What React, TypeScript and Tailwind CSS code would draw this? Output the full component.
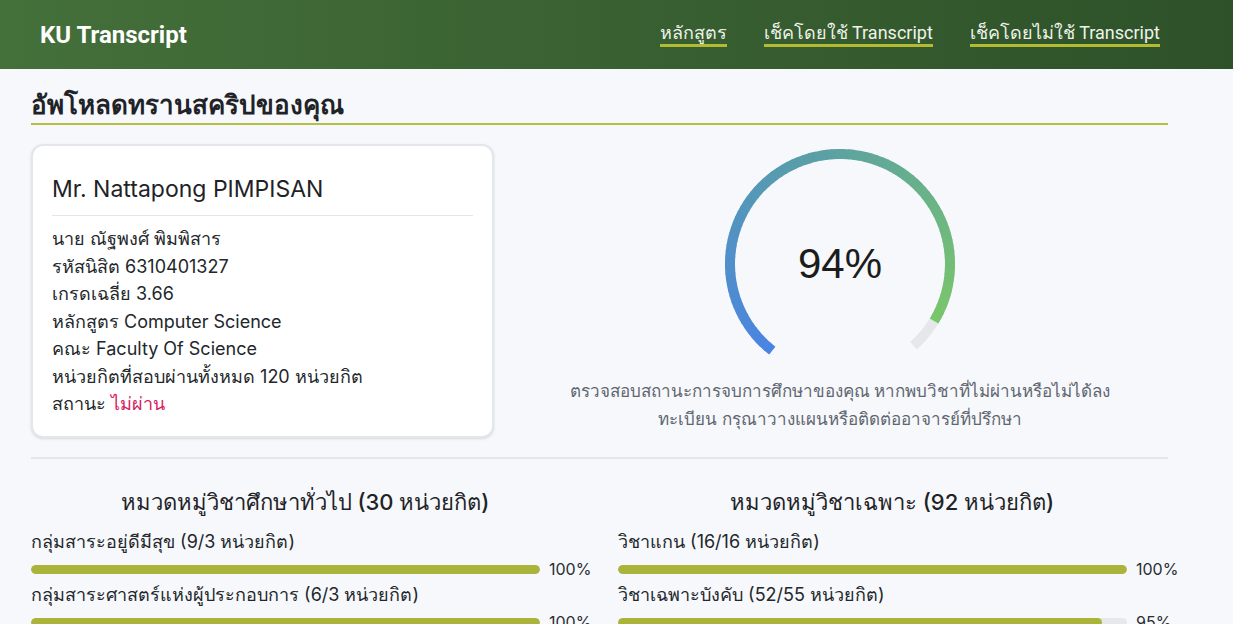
import React from 'react'

const navLinks = ['หลักสูตร', 'เช็คโดยใช้ Transcript', 'เช็คโดยไม่ใช้ Transcript']

const studentInfo = [
    'นาย ณัฐพงศ์ พิมพิสาร',
    'รหัสนิสิต 6310401327',
    'เกรดเฉลี่ย 3.66',
    'หลักสูตร Computer Science',
    'คณะ Faculty Of Science',
    'หน่วยกิตที่สอบผ่านทั้งหมด 120 หน่วยกิต',
]

const categories = [
    {
        title: 'หมวดหมู่วิชาศึกษาทั่วไป (30 หน่วยกิต)',
        groups: [
            { name: 'กลุ่มสาระอยู่ดีมีสุข (9/3 หน่วยกิต)', percent: 100 },
            { name: 'กลุ่มสาระศาสตร์แห่งผู้ประกอบการ (6/3 หน่วยกิต)', percent: 100 },
        ],
    },
    {
        title: 'หมวดหมู่วิชาเฉพาะ (92 หน่วยกิต)',
        groups: [
            { name: 'วิชาแกน (16/16 หน่วยกิต)', percent: 100 },
            { name: 'วิชาเฉพาะบังคับ (52/55 หน่วยกิต)', percent: 95 },
        ],
    },
]

// colour along the arc: blue -> teal -> green
const stops = [
    [74, 132, 226],
    [90, 160, 165],
    [122, 198, 106],
]

function colorAt(t: number) {
    const seg = t < 0.5 ? 0 : 1
    const local = t < 0.5 ? t / 0.5 : (t - 0.5) / 0.5
    const a = stops[seg]
    const b = stops[seg + 1]
    const c = a.map((v, i) => Math.round(v + (b[i] - v) * local))
    return `rgb(${c[0]},${c[1]},${c[2]})`
}

function point(deg: number, r: number) {
    const rad = (deg * Math.PI) / 180
    return [120 + r * Math.cos(rad), 120 + r * Math.sin(rad)]
}

function arc(from: number, to: number, r: number) {
    const [x1, y1] = point(from, r)
    const [x2, y2] = point(to, r)
    const large = to - from > 180 ? 1 : 0
    return `M ${x1} ${y1} A ${r} ${r} 0 ${large} 1 ${x2} ${y2}`
}

function Gauge({ percent }: { percent: number }) {
    const start = 128
    const sweep = 280
    const end = start + sweep * (percent / 100)
    const steps = 90
    const segments = []
    for (let i = 0; i < steps; i++) {
        const a = start + ((end - start) * i) / steps
        const b = start + ((end - start) * (i + 1)) / steps
        segments.push(
            <path
                key={i}
                d={arc(a, Math.min(b + 0.6, end), 110)}
                stroke={colorAt(i / (steps - 1))}
                strokeWidth={10}
                fill="none"
            />
        )
    }
    return (
        <div className="relative w-[240px] h-[215px]">
            <svg width="240" height="215" viewBox="0 0 240 215">
                <path d={arc(start, start + sweep, 110)} stroke="#e5e7e8" strokeWidth={10} fill="none" />
                {segments}
            </svg>
            <div className="absolute left-0 right-0 top-[99px] text-center text-[42px] leading-[42px] text-[#1c1c1c] font-['Liberation_Sans',sans-serif]">
                {percent}%
            </div>
        </div>
    )
}

export default function App() {
    return (
        <div className="min-h-[624px] bg-[#f6f8fb] font-['Inter','Noto_Sans',sans-serif] text-[#1f2328]">
            <header className="h-[69px] flex items-center justify-between pl-10 pr-[73px] bg-gradient-to-r from-[#44703a] to-[#2e5129]">
                <div className="text-white font-bold text-[24px] font-['Roboto',sans-serif]">KU Transcript</div>
                <nav className="flex gap-[37px]">
                    {navLinks.map(link => (
                        <a
                            key={link}
                            href="#"
                            className="text-[18px] leading-[22px] text-[#eef3ea] border-b-[3px] border-[#b3bb33] font-['Roboto',sans-serif]"
                        >
                            {link}
                        </a>
                    ))}
                </nav>
            </header>

            <main className="pl-[31px]">
                <h1 className="w-[1137px] mt-[20px] text-[26px] leading-[32px] font-semibold text-[#1f2328] border-b-2 border-[#b5bf45] pb-[2px]">
                    อัพโหลดทรานสคริปของคุณ
                </h1>

                <div className="flex w-[1137px] mt-[19px]">
                    <div className="w-[463px] h-[294px] bg-white border-2 border-[#e3e6eb] rounded-xl shadow-sm px-[19px] pt-[28px]">
                        <div className="text-[23px] leading-[30px] text-[#1f2328] pb-[11px] border-b border-[#e3e5e8]">
                            Mr. Nattapong PIMPISAN
                        </div>
                        <div className="pt-[9px] text-[18px] leading-[27.5px] text-[#23272b]">
                            {studentInfo.map(line => (
                                <div key={line}>{line}</div>
                            ))}
                            <div>
                                สถานะ <span className="text-[#d6215f]">ไม่ผ่าน</span>
                            </div>
                        </div>
                    </div>

                    <div className="flex-1 flex flex-col items-center pl-[18px]">
                        <Gauge percent={94} />
                        <p className="mt-[18px] text-center text-[17px] leading-[28px] text-[#5f6670]">
                            ตรวจสอบสถานะการจบการศึกษาของคุณ หากพบวิชาที่ไม่ผ่านหรือไม่ได้ลง
                            <br />
                            ทะเบียน กรุณาวางแผนหรือติดต่ออาจารย์ที่ปรึกษา
                        </p>
                    </div>
                </div>

                <div className="w-[1137px] mt-[19px] border-t-2 border-[#e4e6e9]" />

                <div className="grid grid-cols-2 gap-x-[27px] w-[1147px] mt-[27px]">
                    {categories.map(category => (
                        <div key={category.title}>
                            <h2 className="text-center text-[22px] leading-[32px] font-medium text-[#1f2328] pr-[12px]">
                                {category.title}
                            </h2>
                            <div className="mt-[12px] flex flex-col">
                                {category.groups.map(group => (
                                    <div key={group.name} className="h-[53px]">
                                        <div className="text-[18px] leading-[24px] text-[#23272b]">{group.name}</div>
                                        <div className="flex items-center gap-[9px] mt-[3px]">
                                            <div className="flex-1 h-[9px] rounded-full bg-[#e6e8ea] overflow-hidden">
                                                <div
                                                    className="h-full rounded-full bg-[#abb43a]"
                                                    style={{ width: `${group.percent}%` }}
                                                />
                                            </div>
                                            <div className="w-[42px] text-[16px] leading-[24px] text-[#2a2e33]">{group.percent}%</div>
                                        </div>
                                    </div>
                                ))}
                            </div>
                        </div>
                    ))}
                </div>
            </main>
        </div>
    )
}
